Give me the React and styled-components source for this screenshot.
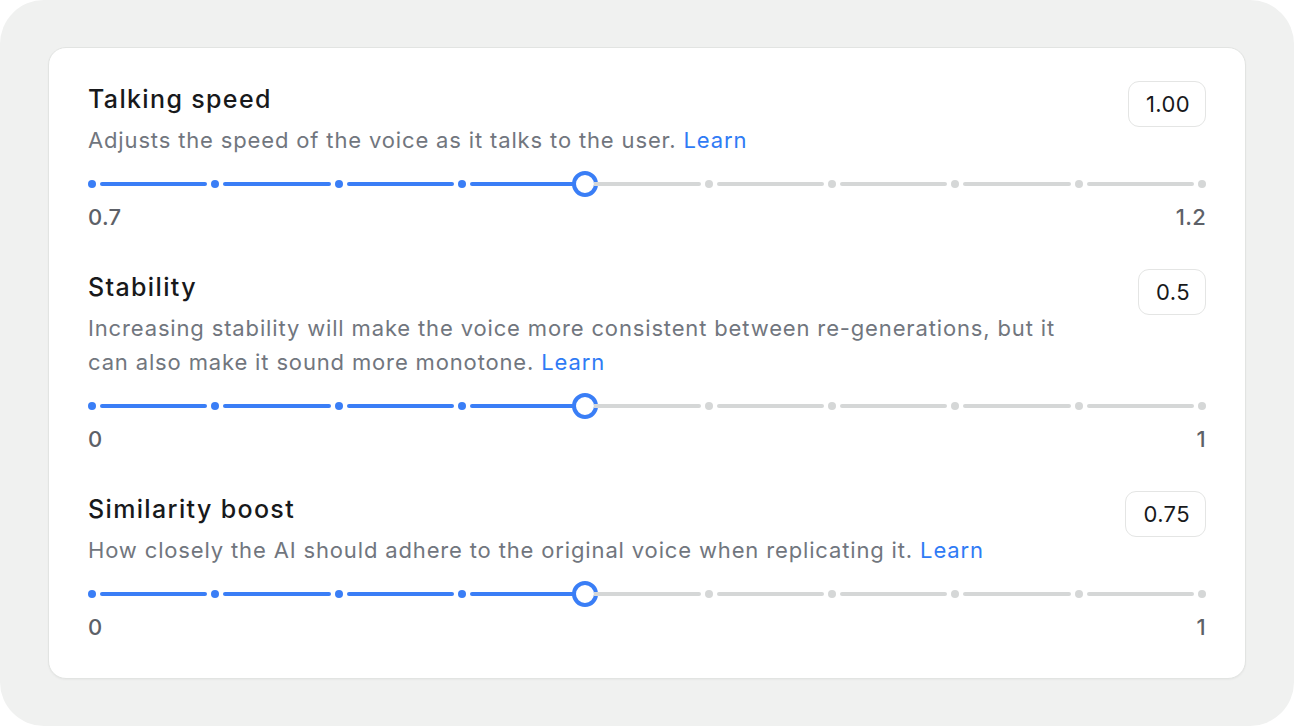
import React from 'react'
import styled, { createGlobalStyle } from 'styled-components'

const GlobalStyle = createGlobalStyle`
  html, body {
    margin: 0;
    padding: 0;
    background: #ffffff;
  }
  body {
    font-family: Inter, "Noto Sans", sans-serif;
    -webkit-font-smoothing: antialiased;
  }
`

const settings = [
  {
    title: 'Talking speed',
    desc: 'Adjusts the speed of the voice as it talks to the user.',
    value: '1.00',
    min: '0.7',
    max: '1.2',
    step: 4,
  },
  {
    title: 'Stability',
    desc: 'Increasing stability will make the voice more consistent between re-generations, but it can also make it sound more monotone.',
    value: '0.5',
    min: '0',
    max: '1',
    step: 4,
  },
  {
    title: 'Similarity boost',
    desc: 'How closely the AI should adhere to the original voice when replicating it.',
    value: '0.75',
    min: '0',
    max: '1',
    step: 4,
  },
]

const STEPS = 9

const Slider = ({ step }) => {
  const items = []
  for (let i = 0; i <= STEPS; i++) {
    items.push(<Dot key={'d' + i} $active={i <= step} />)
    if (i < STEPS) items.push(<Segment key={'s' + i} $active={i < step} />)
  }
  return (
    <Track>
      {items}
      <Thumb style={{ left: `calc(4px + (100% - 8px) * ${step / STEPS})` }} />
    </Track>
  )
}

const Setting = ({ s, first }) => (
  <Section $first={first}>
    <Head>
      <Info>
        <Title>{s.title}</Title>
        <Desc>
          {s.desc} <Learn href="#">Learn</Learn>
        </Desc>
      </Info>
      <ValueBox>{s.value}</ValueBox>
    </Head>
    <Slider step={s.step} />
    <Range>
      <span>{s.min}</span>
      <span>{s.max}</span>
    </Range>
  </Section>
)

const App = () => {
  return (
    <>
      <GlobalStyle />
      <Frame>
        <Card>
          {settings.map((s, i) => (
            <Setting key={s.title} s={s} first={i === 0} />
          ))}
        </Card>
      </Frame>
    </>
  )
}

const Frame = styled.div`
  width: 1294px;
  height: 726px;
  box-sizing: border-box;
  background: #f0f1f0;
  border-radius: 44px;
  padding: 47px 48px;
`

const Card = styled.div`
  box-sizing: border-box;
  height: 632px;
  background: #ffffff;
  border: 1px solid #e2e4e2;
  border-radius: 18px;
  box-shadow: 0 1px 2px rgba(0, 0, 0, 0.04);
  padding: 35px 39px 0 39px;
`

const Section = styled.div`
  margin-top: ${(p) => (p.$first ? '0' : '40px')};
`

const Head = styled.div`
  display: flex;
  justify-content: space-between;
  align-items: flex-start;
  gap: 40px;
`

const Info = styled.div`
  flex: 1;
  min-width: 0;
  max-width: 990px;
`

const Title = styled.div`
  font-size: 25px;
  line-height: 32px;
  font-weight: 500;
  color: #18191b;
  letter-spacing: 1.35px;
`

const Desc = styled.div`
  margin-top: 8px;
  font-size: 22px;
  line-height: 34px;
  color: #71767e;
  letter-spacing: 0.85px;
`

const Learn = styled.a`
  color: #2f7bf5;
  text-decoration: none;
`

const ValueBox = styled.div`
  margin-top: -2px;
  flex-shrink: 0;
  height: 46px;
  box-sizing: border-box;
  padding: 0 15px 0 17px;
  border: 1.5px solid #e4e5e4;
  border-radius: 11px;
  display: flex;
  align-items: center;
  font-size: 22px;
  letter-spacing: 0.4px;
  color: #18191b;
`

const Track = styled.div`
  position: relative;
  margin-top: 14px;
  height: 26px;
  display: flex;
  align-items: center;
`

const Dot = styled.div`
  width: 8px;
  height: 8px;
  border-radius: 50%;
  flex-shrink: 0;
  background: ${(p) => (p.$active ? '#3a7ef6' : '#d5d7d7')};
`

const Segment = styled.div`
  flex: 1;
  height: 4px;
  border-radius: 2px;
  margin: 0 4px;
  background: ${(p) => (p.$active ? '#3a7ef6' : '#d5d7d7')};
`

const Thumb = styled.div`
  position: absolute;
  top: 50%;
  width: 26px;
  height: 26px;
  box-sizing: border-box;
  border: 4px solid #3a7ef6;
  border-radius: 50%;
  background: #ffffff;
  transform: translate(-50%, -50%);
  &::before {
    content: '';
    position: absolute;
    right: 100%;
    top: 50%;
    width: 8px;
    height: 4px;
    margin-top: -2px;
    background: #3a7ef6;
  }
  &::after {
    content: '';
    position: absolute;
    left: 100%;
    top: 50%;
    width: 8px;
    height: 4px;
    margin-top: -2px;
    background: #d5d7d7;
  }
`

const Range = styled.div`
  margin-top: 6px;
  display: flex;
  justify-content: space-between;
  font-size: 22px;
  line-height: 28px;
  font-weight: 500;
  letter-spacing: 0.3px;
  color: #5d6168;
`

export default App
